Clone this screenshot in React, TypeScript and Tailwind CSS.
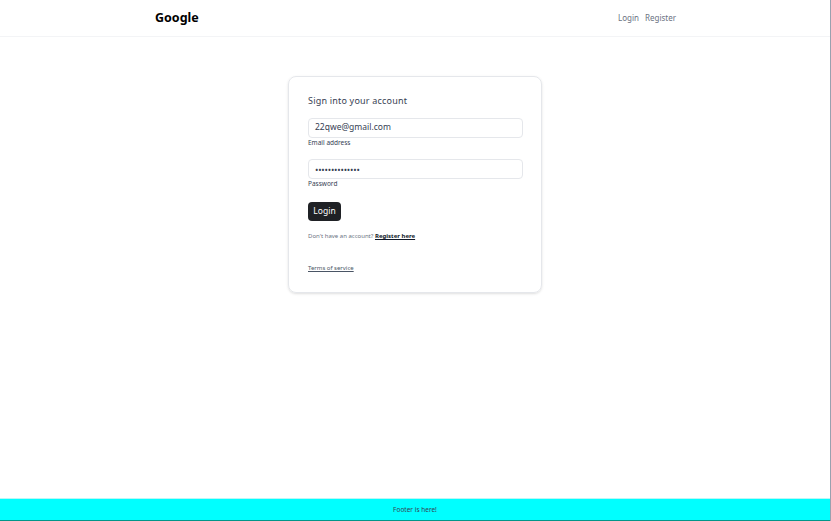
export default function App() {
  return (
    <div className="h-[521px] flex flex-col bg-white border-r border-gray-400 font-['Noto_Sans',sans-serif] text-gray-800">
      <header className="h-[37px] shrink-0 border-b border-gray-100 flex items-center">
        <div className="w-[522px] mx-auto flex items-center justify-between">
          <span className="ml-[1px] text-[12.5px] font-bold text-black">Google</span>
          <nav className="flex gap-[6px] text-[8px] text-gray-500">
            <a>Login</a>
            <a>Register</a>
          </nav>
        </div>
      </header>

      <main className="flex-1 flex justify-center pt-[39px]">
        <div className="w-[254px] h-[217px] rounded-lg border border-gray-200 shadow-sm px-[19px] pt-[17px]">
          <h2 className="text-[9px] tracking-[0.2px] text-gray-700">Sign into your account</h2>

          <div className="mt-[10px]">
            <div className="h-[20px] w-[215px] rounded border border-gray-200 flex items-center px-[6px] text-[8.5px] text-gray-700">
              22qwe@gmail.com
            </div>
            <p className="text-[6.5px] text-gray-700">Email address</p>
          </div>

          <div className="mt-[12px]">
            <div className="h-[20px] w-[215px] rounded border border-gray-200 flex items-center px-[6px] text-[9px] tracking-[-0.2px] text-gray-700">
              ••••••••••••••
            </div>
            <p className="text-[6.5px] text-gray-700">Password</p>
          </div>

          <button className="mt-[13px] h-[19px] w-[33px] rounded bg-[#1f2125] text-white text-[8.5px] flex items-center justify-center">
            Login
          </button>

          <p className="mt-[11px] text-[6px] text-gray-500">
            Don't have an account?{' '}
            <a className="font-bold text-gray-900 underline">Register here</a>
          </p>

          <p className="mt-[23px] text-[6px] text-gray-600 underline">Terms of service</p>
        </div>
      </main>

      <footer className="h-[23px] shrink-0 bg-[#00ffff] border-t border-[#b8f7f7] border-b border-b-teal-600 flex items-center justify-center text-[6.5px] text-gray-700">
        Footer is here!
      </footer>
    </div>
  );
}
